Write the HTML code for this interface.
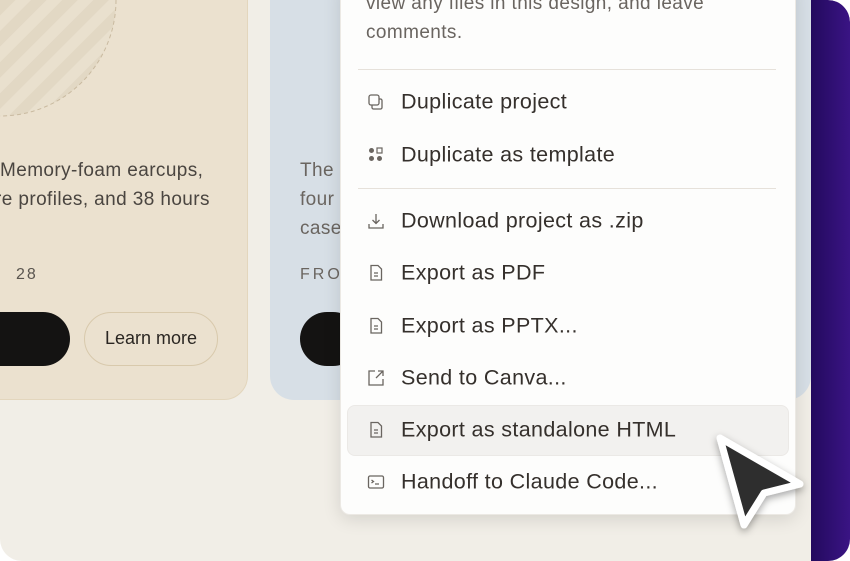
<!DOCTYPE html>
<html><head><meta charset="utf-8"><style>
*{margin:0;padding:0;box-sizing:border-box}
html,body{width:850px;height:561px;background:#fff;overflow:hidden}
.frame{position:absolute;left:0;top:0;width:850px;height:561px;border-radius:0 22px 22px 22px;overflow:hidden;background:#f1eee7;font-family:"Liberation Sans",sans-serif}
.purple{position:absolute;left:811px;top:0;width:39px;height:561px;background:linear-gradient(90deg,#230a5e,#3a1484);border-radius:0 22px 0 0}
.beige{position:absolute;left:-40px;top:-40px;width:288px;height:440px;background:#ebe1cf;border-radius:24px;border:1px solid #e3d6bd}
.blue{position:absolute;left:270px;top:-40px;width:541px;height:440px;background:#d7dfe6;border-radius:24px}
.t{position:absolute;font-size:19px;color:#4a4540;white-space:nowrap;letter-spacing:.4px}
.btnb{position:absolute;height:54px;border-radius:27px;background:#141312}
.lm{position:absolute;left:84px;top:312px;width:134px;height:54px;border-radius:27px;border:1.5px solid #d8c9ac;font-size:18px;color:#2a2622;text-align:center;line-height:51px}
.menu{position:absolute;left:340px;top:-20px;width:456px;height:535px;background:#fdfdfc;border-radius:10px;box-shadow:0 4px 18px rgba(0,0,0,.12);border:1px solid #ece9e4}
.sep{position:absolute;left:358px;width:418px;height:1px;background:#e6e1da}
.it{position:absolute;left:401px;font-size:21.5px;letter-spacing:.35px;color:#35302c;white-space:nowrap;transform:translateY(-50%)}
.ic{position:absolute;left:367px;transform:translateY(-50%)}
.hl{position:absolute;left:347px;top:405px;width:442px;height:51px;background:#f2f1ef;border-radius:8px;border:1px solid #ebe9e6}
</style></head><body><div class="frame">
<div class="beige"></div>
<svg style="position:absolute;left:0;top:0" width="250" height="130">
<defs><pattern id="st" width="22" height="22" patternUnits="userSpaceOnUse" patternTransform="rotate(45)"><rect width="11" height="22" fill="#e2d8c4"/><rect x="11" width="11" height="22" fill="#e9e0ce"/></pattern></defs>
<circle cx="0" cy="0" r="116" fill="url(#st)" stroke="#c9baa0" stroke-dasharray="4 3" stroke-width="1"/></svg>
<div class="blue"></div>
<div class="purple"></div>
<div class="t" style="left:0;top:160px">Memory-foam earcups,</div>
<div class="t" style="left:-5px;top:189px">re profiles, and 38 hours</div>
<div class="t" style="left:16px;top:266px;font-size:16px;letter-spacing:2px;color:#5a554f">28</div>
<div class="btnb" style="left:-40px;top:312px;width:110px"></div>
<div class="lm">Learn more</div>
<div class="t" style="left:300px;top:160px;color:#6a6560">The</div>
<div class="t" style="left:300px;top:189px;color:#6a6560">four</div>
<div class="t" style="left:300px;top:218px;color:#6a6560">case</div>
<div class="t" style="left:300px;top:266px;font-size:16px;letter-spacing:3px;color:#6a6560">FRO</div>
<div class="btnb" style="left:300px;top:312px;width:60px"></div>
<div class="menu"></div>
<div class="t" style="left:366px;top:-7px;color:#6a6560">view any files in this design, and leave</div>
<div class="t" style="left:366px;top:22px;color:#6a6560">comments.</div>
<div class="sep" style="top:69px"></div>
<div class="sep" style="top:188px"></div>
<div class="hl"></div>
<svg class="ic" style="top:102px" width="18" height="18" viewBox="0 0 18 18" fill="none" stroke="#6a6560" stroke-width="1.3"><rect x="2" y="2" width="10" height="10" rx="2"/><path d="M5 12v2.5a1.5 1.5 0 0 0 1.5 1.5h7a1.5 1.5 0 0 0 1.5-1.5v-7A1.5 1.5 0 0 0 13.5 6H12"/></svg>
<div class="it" style="top:102px">Duplicate project</div>
<svg class="ic" style="top:155px" width="18" height="18" viewBox="0 0 18 18" fill="#6a6560"><circle cx="4.5" cy="4.5" r="2.5"/><circle cx="4.5" cy="12.5" r="2.5"/><circle cx="12.5" cy="12.5" r="2.5"/><rect x="10" y="2" width="5" height="5" fill="none" stroke="#6a6560" stroke-width="1.2"/></svg>
<div class="it" style="top:155px">Duplicate as template</div>
<svg class="ic" style="top:221px" width="18" height="18" viewBox="0 0 18 18" fill="none" stroke="#6a6560" stroke-width="1.3"><path d="M9 2v9M5.5 8 9 11.5 12.5 8M2 12v4h14v-4"/></svg>
<div class="it" style="top:221px">Download project as .zip</div>
<svg class="ic" style="top:273px" width="18" height="18" viewBox="0 0 18 18" fill="none" stroke="#6a6560" stroke-width="1.3"><path d="M4 1.5h7l3.5 3.5v11h-10.5z M7 9h4 M7 12h4"/></svg>
<div class="it" style="top:273px">Export as PDF</div>
<svg class="ic" style="top:326px" width="18" height="18" viewBox="0 0 18 18" fill="none" stroke="#6a6560" stroke-width="1.3"><path d="M4 1.5h7l3.5 3.5v11h-10.5z M7 9h4 M7 12h4"/></svg>
<div class="it" style="top:326px">Export as PPTX...</div>
<svg class="ic" style="top:378px" width="18" height="18" viewBox="0 0 18 18" fill="none" stroke="#6a6560" stroke-width="1.3"><path d="M8 2H2v14h14v-6 M11 2h5v5 M16 2 9 9"/></svg>
<div class="it" style="top:378px">Send to Canva...</div>
<svg class="ic" style="top:430px" width="18" height="18" viewBox="0 0 18 18" fill="none" stroke="#6a6560" stroke-width="1.3"><path d="M4 1.5h7l3.5 3.5v11h-10.5z M7 9h4 M7 12h4"/></svg>
<div class="it" style="top:430px">Export as standalone HTML</div>
<svg class="ic" style="top:482px" width="18" height="18" viewBox="0 0 18 18" fill="none" stroke="#6a6560" stroke-width="1.3"><rect x="1.5" y="3" width="15" height="12" rx="1.5"/><path d="M4.5 7l2 1.5-2 1.5M8 11h4"/></svg>
<div class="it" style="top:482px">Handoff to Claude Code...</div>
<svg style="position:absolute;left:700px;top:420px" width="120" height="125" viewBox="700 420 120 125">
<defs><filter id="sh" x="-30%" y="-30%" width="160%" height="160%"><feDropShadow dx="0" dy="3" stdDeviation="4" flood-color="#000" flood-opacity=".35"/></filter></defs>
<path d="M720 438 L800 484 L764 493 L744 525 Z" fill="#2e2e2e" stroke="#fff" stroke-width="7" stroke-linejoin="round" filter="url(#sh)"/>
</svg>
</div></body></html>
